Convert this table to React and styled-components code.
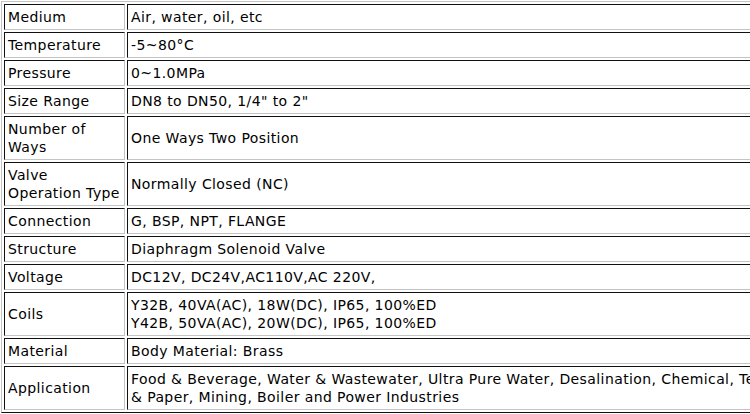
import React from 'react';
import styled, { createGlobalStyle } from 'styled-components';

const GlobalStyle = createGlobalStyle`
  html, body {
    margin: 0;
    padding: 0;
    background: #ffffff;
    overflow: hidden;
  }
`;

const Page = styled.div`
  width: 750px;
  height: 414px;
  overflow: hidden;
  padding: 1px 0 0 1px;
  box-sizing: border-box;
`;

// Old-school border=1 table: outset frame, inset cells
const SpecTable = styled.table`
  border-collapse: separate;
  border-spacing: 2px;
  border-top: 1px solid #c4c4c4;
  border-left: 1px solid #c4c4c4;
  border-bottom: 1px solid #111;
  border-right: 1px solid #111;
  font-family: "DejaVu Sans", Verdana, sans-serif;
  font-size: 14px;
  letter-spacing: 0.4px;
  color: #000;
  table-layout: fixed;
  width: 960px;
`;

const Cell = styled.td`
  border-top: 1px solid #111;
  border-left: 1px solid #111;
  border-bottom: 1px solid #c4c4c4;
  border-right: 1px solid #c4c4c4;
  padding: 3px;
  line-height: 18px;
  vertical-align: middle;
  white-space: nowrap;
  overflow: hidden;
`;

const LabelCell = styled(Cell)`
  width: 113px;
`;

const specs = [
  ['Medium', 'Air, water, oil, etc'],
  ['Temperature', '-5~80°C'],
  ['Pressure', '0~1.0MPa'],
  ['Size Range', 'DN8 to DN50, 1/4" to 2"'],
  [['Number of', 'Ways'], 'One Ways Two Position'],
  [['Valve', 'Operation Type'], 'Normally Closed (NC)'],
  ['Connection', 'G, BSP, NPT, FLANGE'],
  ['Structure', 'Diaphragm Solenoid Valve'],
  ['Voltage', 'DC12V, DC24V,AC110V,AC 220V,'],
  ['Coils', ['Y32B, 40VA(AC), 18W(DC), IP65, 100%ED', 'Y42B, 50VA(AC), 20W(DC), IP65, 100%ED']],
  ['Material', 'Body Material: Brass'],
  [
    'Application',
    [
      'Food & Beverage, Water & Wastewater, Ultra Pure Water, Desalination, Chemical, Textile, Pulp',
      '& Paper, Mining, Boiler and Power Industries',
    ],
  ],
];

const Lines = ({ value }) =>
  Array.isArray(value)
    ? value.map((line, i) => (
        <React.Fragment key={i}>
          {i > 0 && <br />}
          {line}
        </React.Fragment>
      ))
    : value;

const App = () => (
  <Page>
    <GlobalStyle />
    <SpecTable>
      <colgroup>
        <col style={{ width: 121 }} />
        <col />
      </colgroup>
      <tbody>
        {specs.map(([label, value], i) => (
          <tr key={i}>
            <LabelCell>
              <Lines value={label} />
            </LabelCell>
            <Cell>
              <Lines value={value} />
            </Cell>
          </tr>
        ))}
      </tbody>
    </SpecTable>
  </Page>
);

export default App;
